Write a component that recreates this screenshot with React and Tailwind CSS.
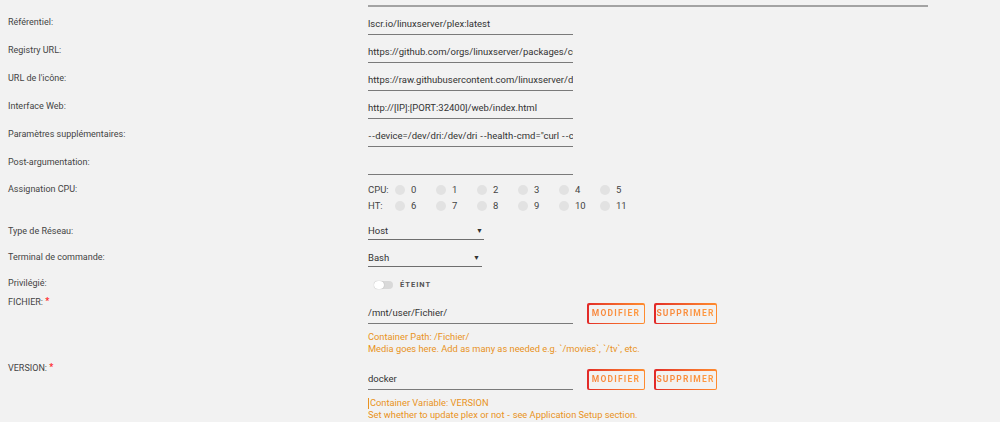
import React from "react";

const FONT = { fontFamily: "Roboto, 'Noto Sans', 'Liberation Sans', sans-serif" };

// Roboto draws "--" almost as one dash; give every hyphen a hair of room.
function Spaced({ text }) {
  const parts = text.split("-");
  return parts.map((p, i) => (
    <React.Fragment key={i}>
      {p}
      {i < parts.length - 1 && <span className="mx-[0.5px]">-</span>}
    </React.Fragment>
  ));
}

function Label({ children, className = "" }) {
  return (
    <div className={`w-[368px] shrink-0 pl-2 text-[9px] leading-[14px] text-[#444] ${className}`}>
      {children}
    </div>
  );
}

function TextRow({ label, value }) {
  return (
    <div className="flex h-[28px]">
      <Label className="mt-[8px]">{label}</Label>
      <div className="h-[28px] w-[205px] overflow-hidden whitespace-nowrap border-b border-[#7a7a7a] pt-[10px] text-[9.5px] leading-[14px] text-[#333]">
        <Spaced text={value} />
      </div>
    </div>
  );
}

function Radio({ n }) {
  return (
    <div className="flex w-[41px] items-center">
      <span className="ml-[2px] h-[10px] w-[10px] rounded-full bg-[#e2e2e2]" />
      <span className="ml-[6px]">{n}</span>
    </div>
  );
}

function SelectRow({ label, value, width, mt, arrowPad }) {
  return (
    <div className="flex h-[28px]">
      <Label className={mt}>{label}</Label>
      <div
        className={`flex h-[23px] items-start justify-between border-b border-[#6e6e6e] pt-[7px] text-[9.5px] leading-[14px] text-[#333] ${width} ${arrowPad}`}
      >
        <span>{value}</span>
        <span className="text-[7px] leading-[14px] text-[#333]">▼</span>
      </div>
    </div>
  );
}

function ActionButton({ children, width }) {
  return (
    <div className={`h-[21px] rounded-[2px] bg-gradient-to-r from-[#e22828] to-[#ff8c2f] p-[1.5px] ${width}`}>
      <div className="flex h-full w-full items-center justify-center rounded-[1px] bg-[#f2f2f2]">
        <span className="bg-gradient-to-r from-[#f7843a] to-[#ff9a40] bg-clip-text text-[8.5px] font-bold tracking-[1.2px] text-transparent">
          {children}
        </span>
      </div>
    </div>
  );
}

function PathRow({ label, value, lines, caret }) {
  return (
    <div className="flex h-[66px]">
      <Label className="mt-[2px]">
        {label} <span className="relative -top-[1px] text-[9px] font-bold text-[#ff2a2a]">*</span>
      </Label>
      <div className="flex flex-col">
        <div className="flex items-end">
          <div className="h-[31px] w-[205px] border-b border-[#7a7a7a] pt-[13px] text-[9.5px] leading-[14px] text-[#333]">
            {value}
          </div>
          <div className="ml-[14px] flex gap-[9px]">
            <ActionButton width="w-[58px]">MODIFIER</ActionButton>
            <ActionButton width="w-[63px]">SUPPRIMER</ActionButton>
          </div>
        </div>
        <div className="mt-[7px] text-[9.3px] leading-[12px] text-[#e99222]">
          {lines.map((l, i) => (
            <div key={i} className="flex items-center whitespace-nowrap">
              {caret && i === 0 && <span className="mr-px inline-block h-[11px] w-px bg-[#e99222]" />}
              <span>
                <Spaced text={l} />
              </span>
            </div>
          ))}
        </div>
      </div>
    </div>
  );
}

export default function App() {
  return (
    <div className="h-[422px] w-[1000px] overflow-hidden bg-[#f2f2f2]" style={FONT}>
      <div className="pt-[5px]">
        <div className="ml-[368px] h-[2px] w-[560px] bg-[#a3a3a3]" />
      </div>

      <TextRow label="Référentiel:" value="lscr.io/linuxserver/plex:latest" />
      <TextRow label="Registry URL:" value="https://github.com/orgs/linuxserver/packages/container/package/plex" />
      <TextRow label="URL de l'icône:" value="https://raw.githubusercontent.com/linuxserver/docker-templates/master/linuxserver.io/img/plex-logo.png" />
      <TextRow label="Interface Web:" value="http://[IP]:[PORT:32400]/web/index.html" />
      <TextRow label="Paramètres supplémentaires:" value={'--device=/dev/dri:/dev/dri --health-cmd="curl --connect-timeout 15 --silent --show-error --fail http://localhost:32400/identity"'} />
      <TextRow label="Post-argumentation:" value="" />

      {/* CPU pinning */}
      <div className="flex h-[42px]">
        <Label className="mt-[7px]">Assignation CPU:</Label>
        <div className="pt-[7px] text-[9.5px] text-[#444]">
          <div className="flex h-[16px] items-center">
            <span className="w-[25px]">CPU:</span>
            {[0, 1, 2, 3, 4, 5].map((n) => (
              <Radio key={n} n={n} />
            ))}
          </div>
          <div className="flex h-[16px] items-center">
            <span className="w-[25px]">HT:</span>
            {[6, 7, 8, 9, 10, 11].map((n) => (
              <Radio key={n} n={n} />
            ))}
          </div>
        </div>
      </div>

      <div className="h-[27px] overflow-visible">
        <SelectRow label="Type de Réseau:" value="Host" width="w-[116px]" mt="mt-[7px]" arrowPad="pr-[1px]" />
      </div>
      <SelectRow label="Terminal de commande:" value="Bash" width="w-[114px]" mt="mt-[6px]" arrowPad="pr-[2px]" />

      {/* Privileged switch */}
      <div className="flex h-[21px]">
        <Label className="mt-[4px]">Privilégié:</Label>
        <div className="mt-[5px] flex items-center">
          <div className="ml-[6px] flex h-[8px] w-[19px] items-center rounded-full bg-[#d9d9d9]">
            <span className="h-[8px] w-[10px] rounded-full bg-white shadow-[0_0_1px_rgba(0,0,0,0.3)]" />
          </div>
          <span className="ml-[7px] text-[7.5px] font-bold tracking-[1px] text-[#555]">ÉTEINT</span>
        </div>
      </div>

      <PathRow
        label="FICHIER:"
        value="/mnt/user/Fichier/"
        lines={["Container Path: /Fichier/", "Media goes here. Add as many as needed e.g. `/movies`, `/tv`, etc."]}
      />
      <PathRow
        label="VERSION:"
        value="docker"
        caret
        lines={["Container Variable: VERSION", "Set whether to update plex or not - see Application Setup section."]}
      />
    </div>
  );
}
